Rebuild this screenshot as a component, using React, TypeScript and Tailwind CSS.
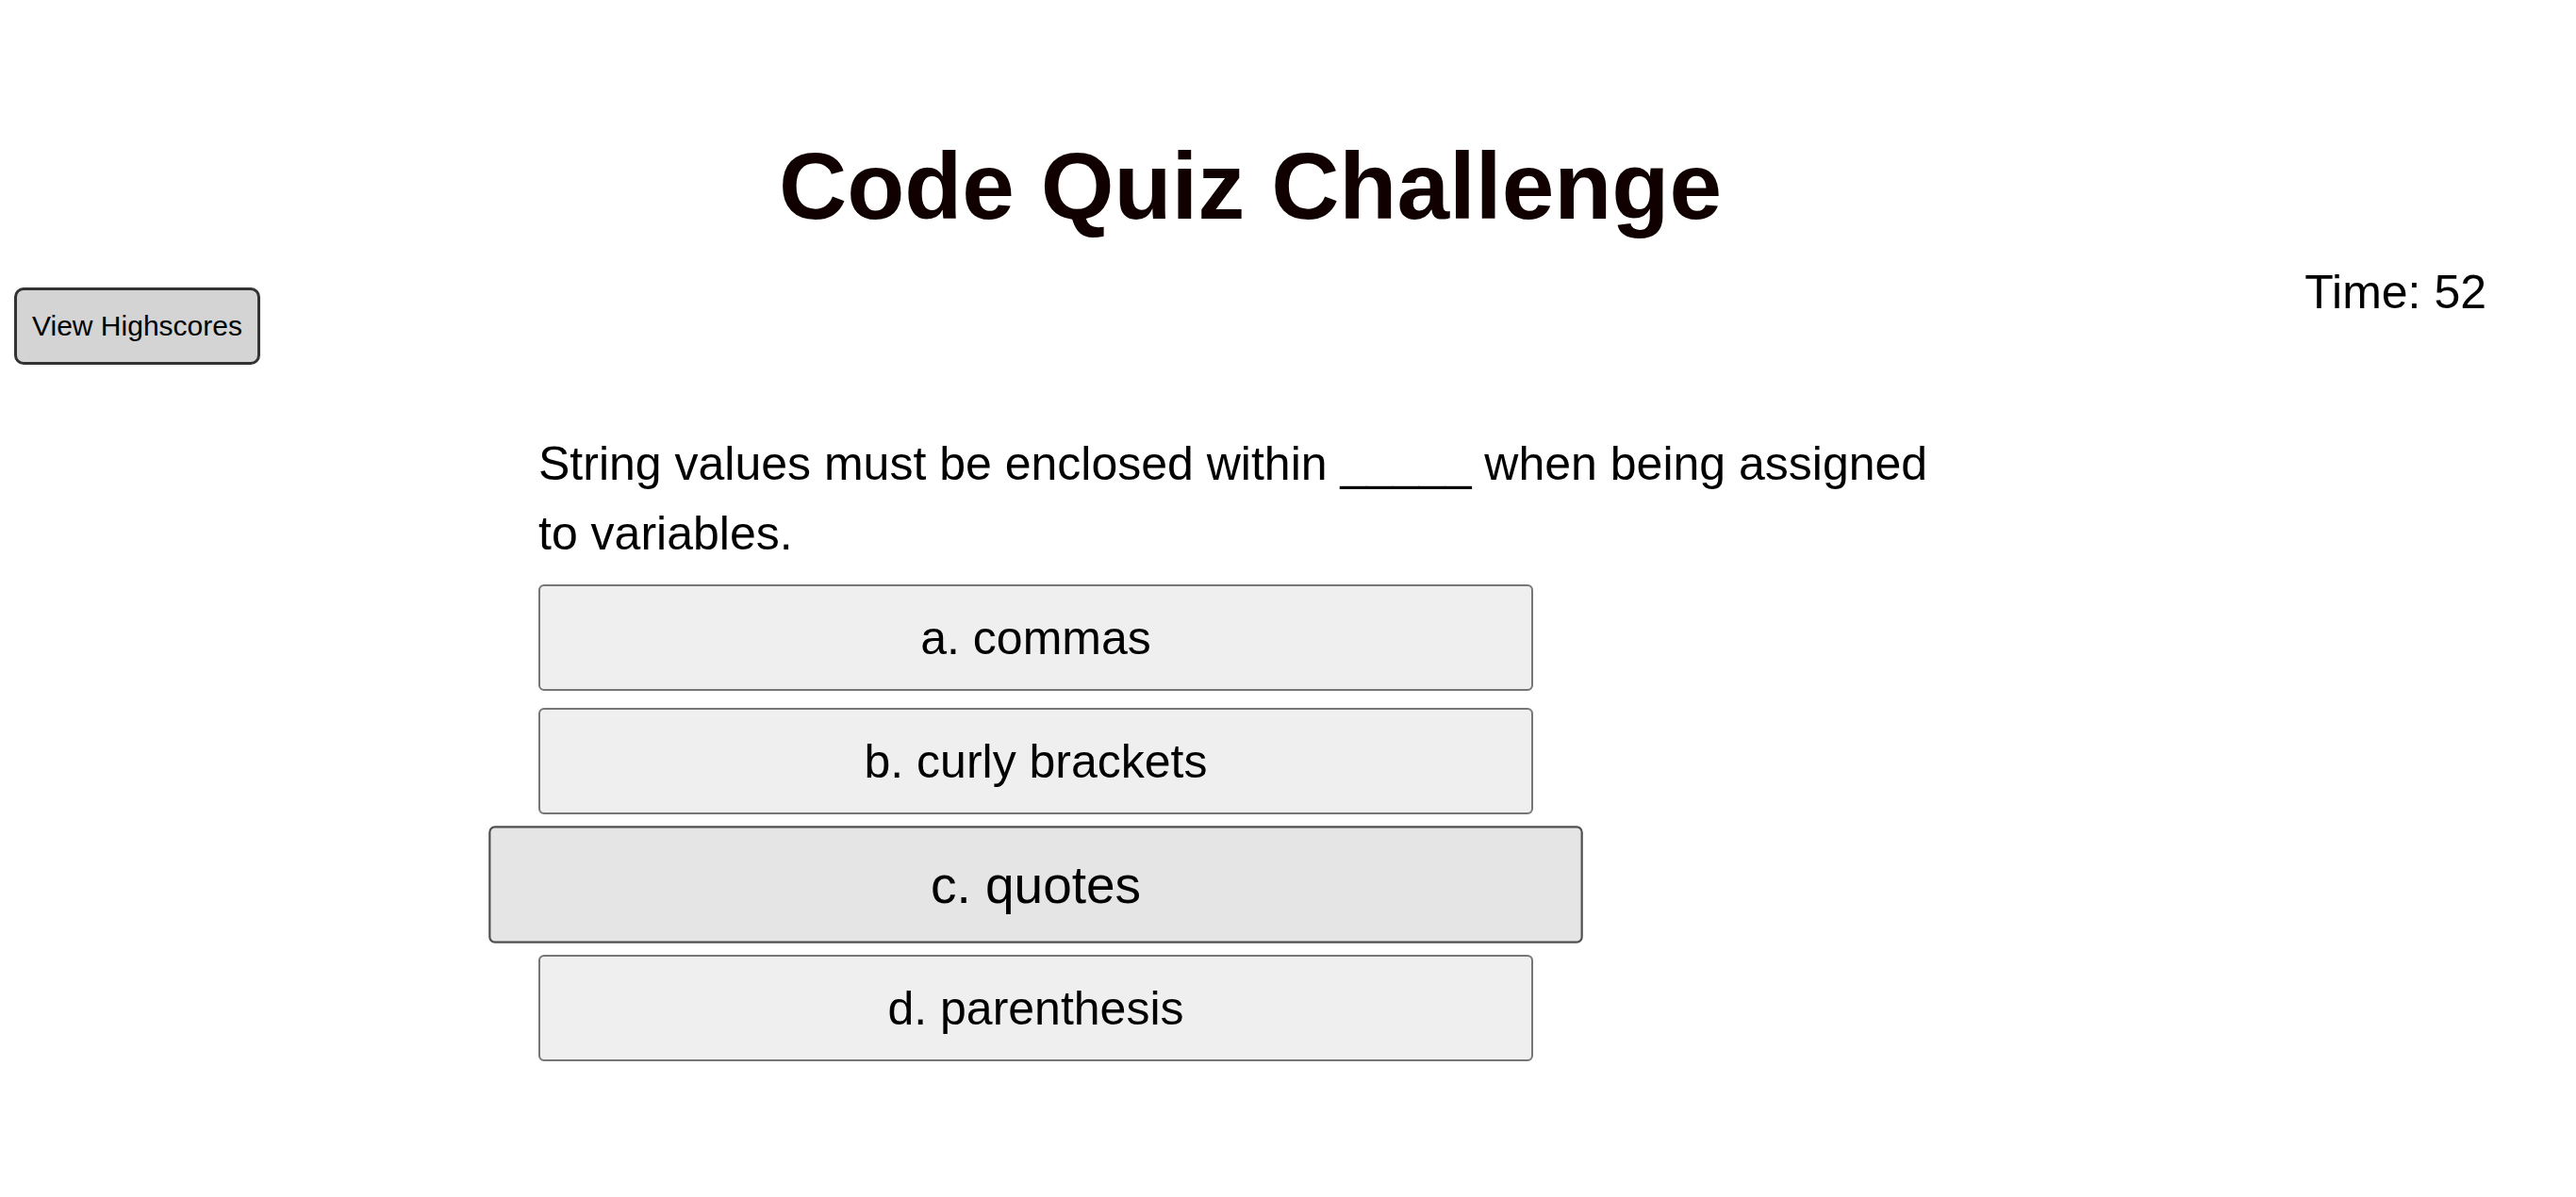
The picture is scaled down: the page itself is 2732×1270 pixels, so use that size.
const answers = [
  { label: 'a. commas', active: false },
  { label: 'b. curly brackets', active: false },
  { label: 'c. quotes', active: true },
  { label: 'd. parenthesis', active: false },
]

export default function App() {
  return (
    <div className="min-h-screen bg-white text-black font-['Liberation_Sans',Arial,sans-serif]">
      {/* Header */}
      <h1 className="pt-[147px] pr-[80px] text-center text-[100px] leading-none font-bold text-[#100000]">
        Code Quiz Challenge
      </h1>

      <div className="flex items-start justify-between">
        <button className="ml-[15px] mt-[58px] flex h-[82px] w-[261px] items-center justify-center rounded-[10px] border-[3px] border-[#333333] bg-[#d4d4d4] text-[30px] leading-none text-black">
          View Highscores
        </button>
        <div className="mr-[95px] mt-[38px] text-[50px] leading-none">Time: 52</div>
      </div>

      {/* Question */}
      <main className="ml-[571px] mt-[68px]">
        <p className="w-[1500px] text-[50px] leading-[74px]">
          String values must be enclosed within _____ when being assigned to variables.
        </p>
        <div className="mt-[17px] flex flex-col gap-[18px]">
          {answers.map((answer) => (
            <button
              key={answer.label}
              className={`flex h-[113px] w-[1055px] items-center justify-center rounded-[6px] border-2 text-[50px] leading-none text-black ${
                answer.active
                  ? 'scale-110 border-[#4f4f4f] bg-[#e5e5e5]'
                  : 'border-[#767676] bg-[#efefef]'
              }`}
            >
              {answer.label}
            </button>
          ))}
        </div>
      </main>
    </div>
  )
}
